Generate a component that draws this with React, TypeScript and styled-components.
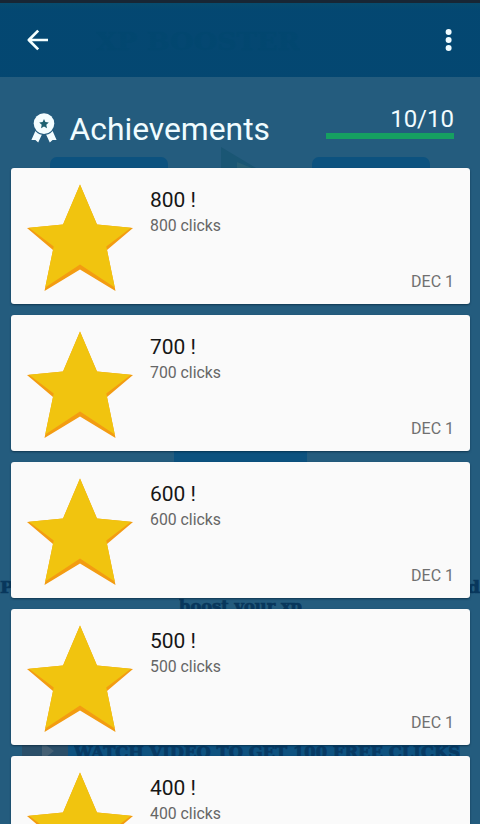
import * as React from "react"
import styled, { createGlobalStyle } from "styled-components"

const achievements = [
  { title: "800 !", description: "800 clicks", date: "DEC 1" },
  { title: "700 !", description: "700 clicks", date: "DEC 1" },
  { title: "600 !", description: "600 clicks", date: "DEC 1" },
  { title: "500 !", description: "500 clicks", date: "DEC 1" },
  { title: "400 !", description: "400 clicks", date: "DEC 1" },
]

const App = () => (
  <Screen>
    <GlobalStyle />
    <GameScreen />
    <StatusBar />
    <Toolbar>
      <IconButton aria-label="Back">
        <svg width="24" height="24" viewBox="0 0 24 24">
          <path
            d="M23 12H4M13.200 2.600L3.800 12l9.400 9.400"
            fill="none"
            stroke="#f4ffff"
            strokeWidth="2.7"
            strokeLinejoin="round"
          />
        </svg>
      </IconButton>
      <IconButton aria-label="More options">
        <svg width="24" height="24" viewBox="0 0 24 24" fill="#f0fbff">
          <circle cx="11.6" cy="4" r="3" />
          <circle cx="11.6" cy="12" r="3" />
          <circle cx="11.6" cy="20" r="3" />
        </svg>
      </IconButton>
    </Toolbar>
    <Header>
      <Ribbon />
      <Title>Achievements</Title>
      <Progress>
        <Count>10/10</Count>
        <Bar />
      </Progress>
    </Header>
    <List>
      {achievements.map(item => (
        <Card key={item.title}>
          <Star />
          <CardBody>
            <CardTitle>{item.title}</CardTitle>
            <CardText>{item.description}</CardText>
            <CardDate>{item.date}</CardDate>
          </CardBody>
        </Card>
      ))}
    </List>
  </Screen>
)

export default App

const Ribbon = () => (
  <RibbonIcon viewBox="0 0 26 30">
    <path d="M4.6 17.5L0.4 27l4-.1 2.8 2.7 4.2-9z" fill="#f4fdff" />
    <path d="M21.4 17.5l4.2 9.5-4-.1-2.8 2.7-4.2-9z" fill="#f4fdff" />
    <circle cx="13" cy="10.8" r="11.2" fill="#245c7e" />
    <circle cx="13" cy="10.6" r="10.3" fill="#f4fdff" />
    <path
      d="M13 6l1.4 3.1 3.4.4-2.5 2.3.7 3.4-3-1.7-3 1.7.7-3.4-2.5-2.3 3.4-.4z"
      fill="#1c6070"
    />
  </RibbonIcon>
)

const Star = () => (
  <StarIcon viewBox="0 0 108 108">
    <path
      d="M54 0.500L71 40.500l36 3.500L81 66l8.500 41L54 85.500 18.500 107l8.500-41L1 44l36-3.500z"
      fill="#f39c12"
    />
    <path
      d="M54 0.500L71 40.500l34 3.300L80.300 62.500l8.500 41L54 80.500 19.200 103.500l8.500-41L3 43.800l34-3.300z"
      fill="#f1c40f"
    />
  </StarIcon>
)

// The dimmed game screen that shows through behind the list
const GameScreen = () => (
  <Backdrop aria-hidden="true">
    <Ghost $x={96} $y={27} $size={25} $width={204} $color="#12566a">
      XP BOOSTER
    </Ghost>
    <GhostButton $x={50} $y={157} $width={118} />
    <GhostButton $x={312} $y={157} $width={118} />
    <GhostArrow viewBox="0 0 40 24">
      <path d="M0 0l40 24H0z" fill="#1a5674" />
      <path d="M16 15l22 9H16z" fill="#285f75" />
    </GhostArrow>
    <GhostButton $x={174} $y={430} $width={133} />
    <Ghost $x={0} $y={577} $size={17} $width={480} $color="#08375c">
      Press the button as many times as you can and
    </Ghost>
    <Ghost $x={179} $y={597} $size={16} $width={123} $color="#08375c">
      boost your xp
    </Ghost>
    <GhostBanner />
    <GhostPlay viewBox="0 0 46 24">
      <path d="M0 0h46v24H0z" fill="#2b4f69" />
      <path d="M20 3l12 9-12 9z" fill="#456074" />
    </GhostPlay>
    <Ghost $x={74} $y={743} $size={16} $width={386} $color="#073a64">
      WATCH VIDEO TO GET 100 FREE CLICKS
    </Ghost>
  </Backdrop>
)

interface GhostProps {
  $x: number
  $y: number
  $size: number
  $width: number
  $color: string
}

const Ghost = ({ $x, $y, $size, $width, $color, children }: GhostProps & { children: string }) => (
  <GhostLine $x={$x} $y={$y} $size={$size} $width={$width}>
    <text
      x="0"
      y={$size * 0.92}
      textLength={$width}
      lengthAdjust="spacingAndGlyphs"
      fontSize={$size}
      fill={$color}
      stroke={$color}
      strokeWidth="0.7"
    >
      {children}
    </text>
  </GhostLine>
)

const GlobalStyle = createGlobalStyle`
  body {
    margin: 0;
    overflow: hidden;
    background: #245c7e;
    font-family: Roboto, sans-serif;
  }
`

const Screen = styled.div`
  position: relative;
  z-index: 0;
  width: 480px;
  height: 824px;
  overflow: hidden;
  background: #245c7e;
`

const StatusBar = styled.div`
  height: 3px;
  background: #182634;
`

const Toolbar = styled.header`
  display: flex;
  align-items: center;
  justify-content: space-between;
  height: 74px;
  padding: 0 19px 0 25px;
  box-sizing: border-box;
  background: linear-gradient(rgba(4, 74, 108, 0.9), rgba(0, 69, 112, 0.9) 8px);
`

const IconButton = styled.button`
  display: flex;
  padding: 0;
  border: 0;
  background: none;
`

const Header = styled.div`
  display: flex;
  height: 91px;
  padding: 0 26px 0 30px;
  box-sizing: border-box;
  color: #f0fcff;
`

const Title = styled.h1`
  margin: 33px 0 0 13px;
  font-weight: 400;
  font-size: 31.8px;
  line-height: 38px;
`

const Progress = styled.div`
  width: 128px;
  margin: 28px 0 0 auto;
`

const Count = styled.div`
  font-size: 24px;
  line-height: 29px;
  text-align: right;
`

const Bar = styled.div`
  height: 6px;
  margin-top: -1px;
  background: #16a061;
`

const List = styled.div`
  display: grid;
  gap: 11px;
  padding: 0 10px 0 11px;
`

const Card = styled.div`
  display: flex;
  height: 136px;
  padding: 16px 16px 13px 15px;
  box-sizing: border-box;
  border-radius: 3px;
  background: #fafafa;
  box-shadow: 0 1px 2px rgba(0, 30, 50, 0.6);
`

const CardBody = styled.div`
  display: flex;
  flex: 1;
  flex-direction: column;
  margin-left: 16px;
`

const CardTitle = styled.h2`
  margin: 3px 0 0;
  font-weight: 400;
  font-size: 21px;
  line-height: 26px;
  color: #161616;
`

const CardText = styled.p`
  margin: 2px 0 0;
  font-size: 15.8px;
  line-height: 21px;
  color: #666;
`

const CardDate = styled.span`
  margin-top: auto;
  font-size: 16px;
  line-height: 19px;
  text-align: right;
  color: #707070;
`

const RibbonIcon = styled.svg`
  width: 26px;
  height: 30px;
  margin: 35.5px 0 0 0.5px;
`

const StarIcon = styled.svg`
  width: 108px;
  height: 108px;
`

const Backdrop = styled.div`
  position: absolute;
  z-index: -1;
  inset: 0;
`

const GhostLine = styled.svg<{ $x: number; $y: number; $size: number; $width: number }>`
  position: absolute;
  left: ${p => p.$x}px;
  top: ${p => p.$y}px;
  width: ${p => p.$width}px;
  height: ${p => p.$size * 1.3}px;
  font-family: "DejaVu Serif", serif;
  font-weight: 700;
`

const GhostButton = styled.div<{ $x: number; $y: number; $width: number }>`
  position: absolute;
  left: ${p => p.$x}px;
  top: ${p => p.$y}px;
  width: ${p => p.$width}px;
  height: 60px;
  border-radius: 7px;
  background: #0c527f;
`

const GhostBanner = styled.div`
  position: absolute;
  left: 68px;
  top: 735px;
  width: 392px;
  height: 30px;
  background: #0e5280;
`

const GhostArrow = styled.svg`
  position: absolute;
  left: 221px;
  top: 147px;
  width: 40px;
  height: 24px;
`

const GhostPlay = styled.svg`
  position: absolute;
  left: 22px;
  top: 739px;
  width: 46px;
  height: 24px;
`
